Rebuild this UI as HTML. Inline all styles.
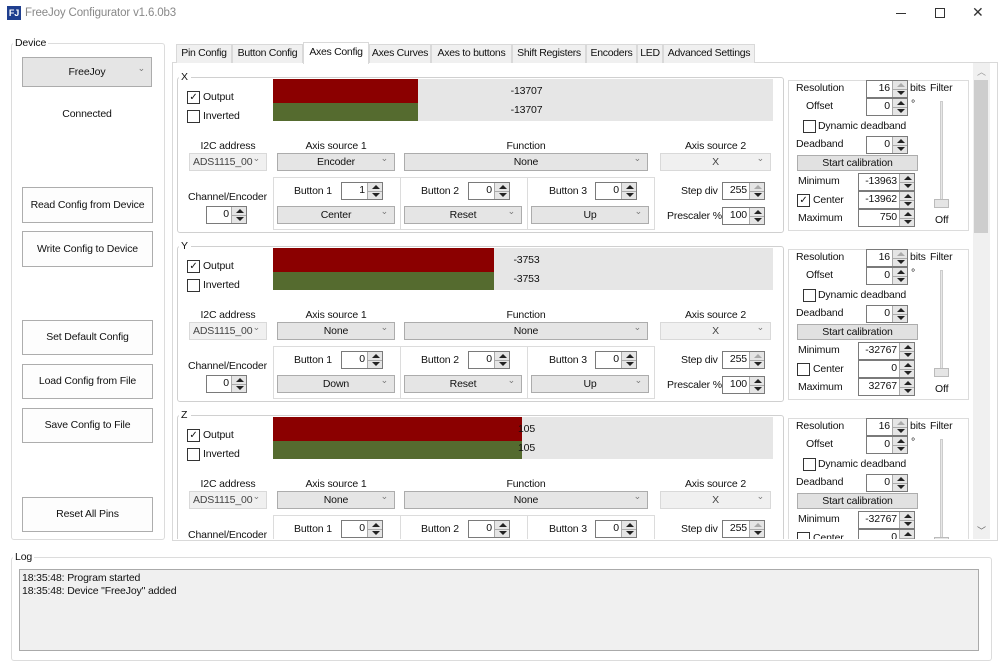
<!DOCTYPE html>
<html><head><meta charset="utf-8">
<style>
*{box-sizing:border-box;margin:0;padding:0}
body{width:1000px;height:669px;background:#fff;font-family:"Liberation Sans",sans-serif;font-size:10.5px;letter-spacing:-0.15px;color:#111;position:relative;overflow:hidden}
.a{position:absolute}
.t{position:absolute;white-space:nowrap;line-height:13px}
.c{text-align:center}
.grp{position:absolute;border:1px solid #dcdcdc;border-radius:3px}
.gl{position:absolute;background:#fff;padding:0 2px;line-height:12px;white-space:nowrap}
.btn{position:absolute;background:#e1e1e1;border:1px solid #adadad;text-align:center;white-space:nowrap}
.btnw{position:absolute;background:#fdfdfd;border:1px solid #adadad;text-align:center;white-space:nowrap}
.cmb{position:absolute;background:#e5e5e5;border:1px solid #acacac;text-align:center;line-height:16px;white-space:nowrap;overflow:hidden}
.cmb.d{background:#f0f0f0;border-color:#d9d9d9;color:#444}
.cmb::after{content:"\2304";position:absolute;right:6px;top:-4px;font-size:9px;color:#777}
.spin{position:absolute;background:#fff;border:1px solid #7a7a7a;text-align:right;padding-right:17px;line-height:15px}
.spin::after{content:"";position:absolute;right:0;top:0;width:14px;height:100%;background:#e5e5e5;border-left:1px solid #aaa;
 background-image:linear-gradient(#aaa,#aaa);background-size:100% 1px;background-position:0 50%;background-repeat:no-repeat}
.ar{position:absolute;right:3px;width:0;height:0;border-left:4px solid transparent;border-right:4px solid transparent;z-index:2}
.cb{position:absolute;width:13px;height:13px;border:1px solid #333;background:#fff;font-size:10px;line-height:11px;text-align:center}
.tab{position:absolute;top:44px;height:19px;border:1px solid #d9d9d9;border-bottom:none;background:#f0f0f0;text-align:center;line-height:17px;white-space:nowrap;letter-spacing:-0.3px}
</style></head><body>
<div class="a" style="left:7px;top:6px;width:14px;height:14px;background:#1f3f8f;color:#fff;font-size:9px;font-weight:bold;line-height:14px;text-align:center">FJ</div>
<div class="t" style="left:25px;top:7px;color:#888;font-size:11.5px">FreeJoy Configurator v1.6.0b3</div>
<div class="a" style="left:896px;top:13px;width:10px;height:1px;background:#333"></div>
<div class="a" style="left:935px;top:8px;width:10px;height:10px;border:1px solid #333"></div>
<div class="t" style="left:972px;top:6px;font-size:14px;color:#333">✕</div>

<div class="grp" style="left:11px;top:43px;width:154px;height:497px"></div>
<div class="gl" style="left:13px;top:37px">Device</div>
<div class="cmb" style="left:22px;top:57px;width:130px;height:30px;line-height:28px">FreeJoy</div>
<div class="t c" style="left:22px;top:108px;width:130px">Connected</div>
<div class="btnw" style="left:22px;top:187px;width:131px;height:36px;line-height:34px">Read Config from Device</div>
<div class="btnw" style="left:22px;top:231px;width:131px;height:36px;line-height:34px">Write Config to Device</div>
<div class="btnw" style="left:22px;top:320px;width:131px;height:35px;line-height:33px">Set Default Config</div>
<div class="btnw" style="left:22px;top:364px;width:131px;height:35px;line-height:33px">Load Config from File</div>
<div class="btnw" style="left:22px;top:408px;width:131px;height:35px;line-height:33px">Save Config to File</div>
<div class="btnw" style="left:22px;top:497px;width:131px;height:35px;line-height:33px">Reset All Pins</div>

<div class="a" style="left:172px;top:62px;width:826px;height:479px;border:1px solid #d9d9d9;background:#fff"></div>
<div class="tab" style="left:176px;width:56px">Pin Config</div>
<div class="tab" style="left:232px;width:71px">Button Config</div>
<div class="tab" style="left:369px;width:62px">Axes Curves</div>
<div class="tab" style="left:431px;width:81px">Axes to buttons</div>
<div class="tab" style="left:512px;width:74px">Shift Registers</div>
<div class="tab" style="left:586px;width:51px">Encoders</div>
<div class="tab" style="left:637px;width:26px">LED</div>
<div class="tab" style="left:663px;width:92px">Advanced Settings</div>
<div class="tab" style="left:303px;top:42px;width:66px;height:22px;background:#fff;border-color:#d9d9d9;line-height:19px">Axes Config</div>

<div id="sc" class="a" style="left:173px;top:63px;width:800px;height:476px;overflow:hidden"></div>
<div class="a" style="left:973px;top:63px;width:17px;height:476px;background:#f0f0f0"></div>
<div class="t" style="left:977px;top:66px;color:#999;font-size:9px">︿</div>
<div class="a" style="left:974px;top:80px;width:14px;height:153px;background:#cdcdcd"></div>
<div class="t" style="left:977px;top:525px;color:#666;font-size:9px">﹀</div>

<div class="grp" style="left:11px;top:557px;width:981px;height:104px"></div>
<div class="gl" style="left:13px;top:551px">Log</div>
<div class="a" style="left:19px;top:569px;width:960px;height:82px;background:#f0f0f0;border:1px solid #aaa"></div>
<div class="t" style="left:22px;top:572px">18:35:48: Program started</div>
<div class="t" style="left:22px;top:585px">18:35:48: Device "FreeJoy" added</div>

<script>
var sc=document.getElementById('sc');
function spin(x,y,w,v,dim){var ox=173,oy=63;x-=ox;y-=oy;
 return '<div class="spin" style="left:'+x+'px;top:'+y+'px;width:'+w+'px;height:18px">'+v+'</div>'+
 '<div class="ar" style="left:'+(x+w-11)+'px;top:'+(y+3)+'px;border-bottom:4px solid '+(dim?'#aaa':'#222')+'"></div>'+
 '<div class="ar" style="left:'+(x+w-11)+'px;top:'+(y+11)+'px;border-top:4px solid #222"></div>';}
function t(x,y,s,extra){return '<div class="t" style="left:'+(x-173)+'px;top:'+(y-63-6)+'px;'+(extra||'')+'">'+s+'</div>';}
function tc(x1,x2,y,s){return '<div class="t c" style="left:'+(x1-173)+'px;width:'+(x2-x1)+'px;top:'+(y-63-6)+'px">'+s+'</div>';}
function box(cls,x,y,w,h,s,st){return '<div class="'+cls+'" style="left:'+(x-173)+'px;top:'+(y-63)+'px;width:'+w+'px;height:'+h+'px;'+(st||'')+'">'+(s||'')+'</div>';}
function cb(x,y,ch){return '<div class="cb" style="left:'+(x-173)+'px;top:'+(y-63)+'px">'+(ch?'✓':'')+'</div>';}
function panel(o,d){var h='';
 h+=box('grp',177,77+o,607,156,'','border-color:#d0d0d0');
 h+=box('gl',179,71+o,12,12,d.n);
 h+=cb(187,91+o,1)+t(203,97+o,'Output');
 h+=cb(187,110+o,0)+t(203,116+o,'Inverted');
 h+=box('a',273,79+o,500,24,'','background:#e6e6e6');
 h+=box('a',273,79+o,d.w,24,'','background:#8b0000');
 h+=box('a',273,103+o,500,18,'','background:#e6e6e6');
 h+=box('a',273,103+o,d.w,18,'','background:#556b2f');
 h+=tc(273,780,91+o,d.v)+tc(273,780,110+o,d.v);
 h+=tc(189,267,146+o,'I2C address')+box('cmb d',189,153+o,78,18,'ADS1115_00&nbsp;&nbsp;','text-align:left;padding-left:3px');
 h+=tc(277,395,146+o,'Axis source 1')+box('cmb',277,153+o,118,18,d.s1);
 h+=tc(404,648,146+o,'Function')+box('cmb',404,153+o,244,18,'None');
 h+=tc(660,771,146+o,'Axis source 2')+box('cmb d',660,153+o,111,18,'X');
 h+=box('a',273,177+o,382,53,'','border:1px solid #dcdcdc');
 h+=box('a',400,177+o,1,53,'','background:#dcdcdc')+box('a',527,177+o,1,53,'','background:#dcdcdc');
 h+=tc(180,275,197+o,'Channel/Encoder')+spin(206,206+o,41,'0');
 h+=t(294,191+o,'Button 1')+spin(341,182+o,42,d.b1);
 h+=t(421,191+o,'Button 2')+spin(468,182+o,42,'0');
 h+=t(549,191+o,'Button 3')+spin(595,182+o,42,'0');
 h+=box('cmb',277,206+o,118,18,d.c1)+box('cmb',404,206+o,118,18,'Reset')+box('cmb',531,206+o,118,18,d.c3);
 h+=t(681,191+o,'Step div')+spin(722,182+o,43,'255',1);
 h+=t(667,216+o,'Prescaler %')+spin(722,207+o,43,'100');
 h+=box('a',788,80+o,181,151,'','border:1px solid #dcdcdc');
 h+=t(796,88+o,'Resolution')+spin(866,80+o,42,'16',1)+t(910,88+o,'bits')+t(930,88+o,'Filter');
 h+=t(806,106+o,'Offset')+spin(866,98+o,42,'0')+t(911,104+o,'°');
 h+=cb(803,120+o,0)+t(818,126+o,'Dynamic deadband');
 h+=t(796,144+o,'Deadband')+spin(866,136+o,42,'0');
 h+=box('btn',797,155+o,121,16,'Start calibration','line-height:14px');
 h+=t(798,181+o,'Minimum')+spin(858,173+o,57,d.mn);
 h+=cb(797,194+o,d.ck)+t(813,200+o,'Center')+spin(858,191+o,57,d.ce);
 h+=t(798,218+o,'Maximum')+spin(858,209+o,57,d.mx);
 h+=box('a',940,101+o,3,104,'','background:#e7e7e7;border:1px solid #ccc');
 h+=box('a',934,199+o,15,9,'','background:#e5e5e5;border:1px solid #bbb');
 h+=t(935,220+o,'Off');
 return h;}
sc.innerHTML=panel(0,{n:'X',w:145,v:'-13707',s1:'Encoder',b1:'1',c1:'Center',c3:'Up',mn:'-13963',ce:'-13962',mx:'750',ck:1})+
panel(169,{n:'Y',w:221,v:'-3753',s1:'None',b1:'0',c1:'Down',c3:'Up',mn:'-32767',ce:'0',mx:'32767',ck:0})+
panel(338,{n:'Z',w:249,v:'105',s1:'None',b1:'0',c1:'Down',c3:'Up',mn:'-32767',ce:'0',mx:'32767',ck:0});
</script>
</body></html>
